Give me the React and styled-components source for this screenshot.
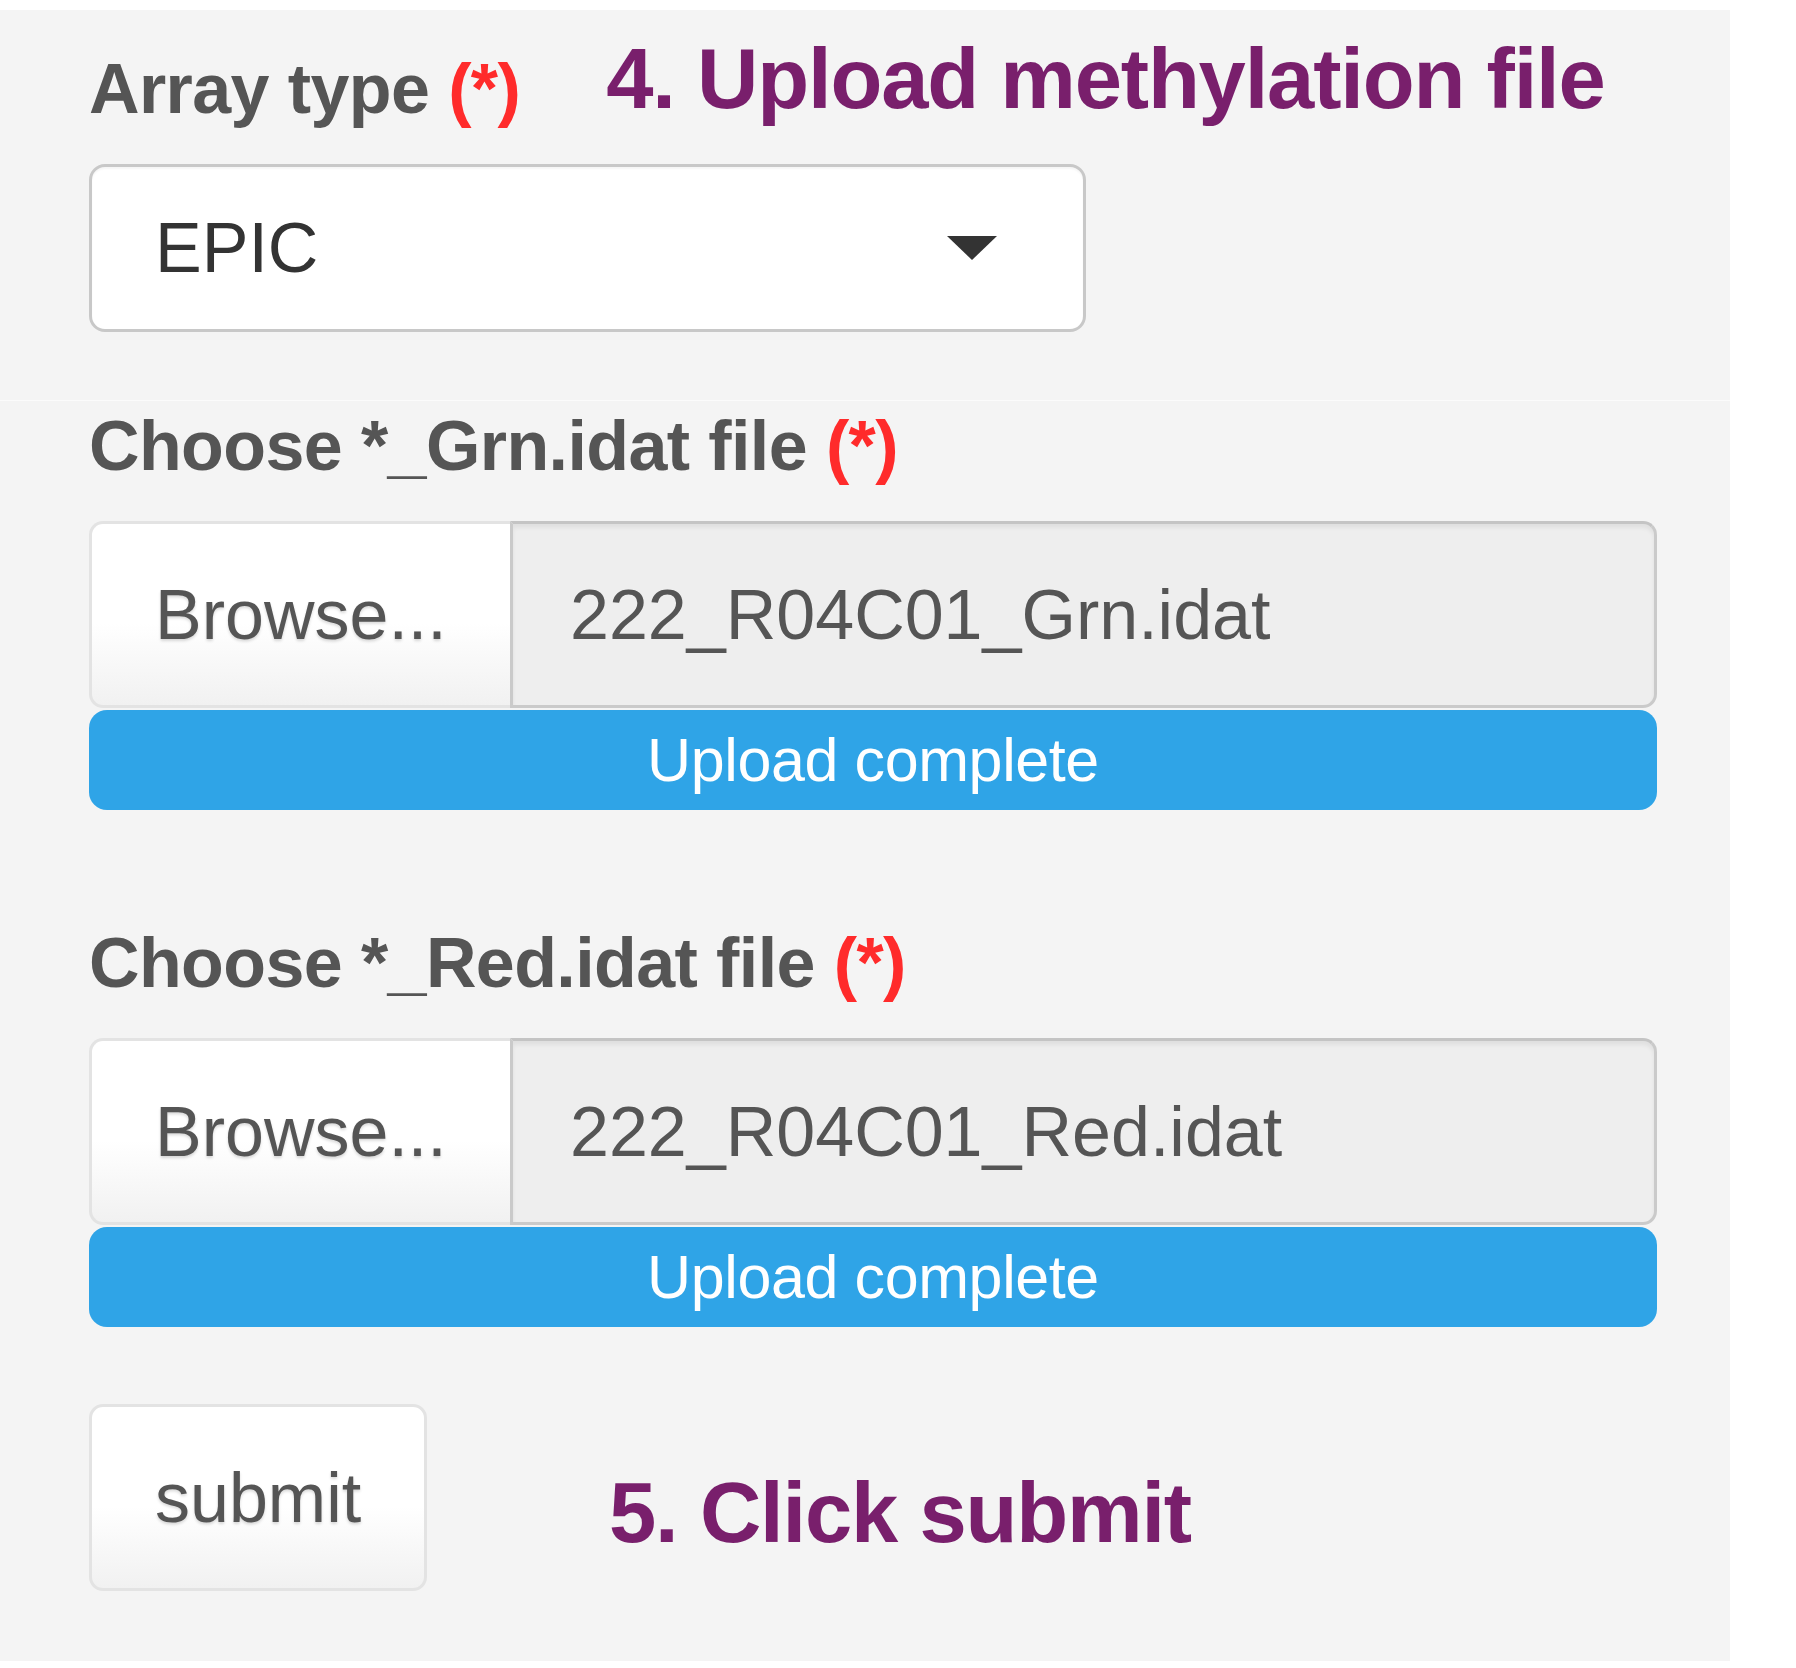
import styled, { createGlobalStyle } from 'styled-components';

const GlobalStyle = createGlobalStyle`
  html, body {
    margin: 0;
    padding: 0;
    background: #fff;
  }
  body {
    font-family: 'Liberation Sans', Arial, sans-serif;
    color: #555;
  }
`;

const Panel = styled.div`
  width: 1730px;
  margin-top: 10px;
  background-color: #f4f4f4;
  display: flex;
  flex-direction: column;
`;

// top part with the select, has its own light line at the bottom
const Section = styled.section`
  box-sizing: border-box;
  padding: ${(p) => p.$pad};
  padding-left: 89px;
  border-bottom: ${(p) => (p.$divided ? '1px solid #fbfbfb' : 'none')};
  display: flex;
  flex-direction: column;
  align-items: flex-start;
`;

const HeadRow = styled.div`
  display: flex;
  align-items: flex-start;
`;

const Label = styled.label`
  display: block;
  font-size: 70px;
  line-height: 70px;
  font-weight: 700;
  color: #555;
  letter-spacing: -0.6px;
  margin-top: ${(p) => p.$top || 0}px;
  white-space: nowrap;
  > span {
    color: #ff2b2b;
  }
`;

const Note = styled.div`
  font-size: 85px;
  line-height: 85px;
  font-weight: 700;
  color: #791f6c;
  letter-spacing: -1.2px;
  white-space: nowrap;
  margin-left: ${(p) => p.$left}px;
  margin-top: ${(p) => p.$top}px;
`;

const Select = styled.div`
  box-sizing: border-box;
  width: 997px;
  height: 168px;
  margin-top: 40px;
  background: #fff;
  border: 3px solid #c8c8c8;
  border-radius: 16px;
  box-shadow: inset 0 2px 2px rgba(0, 0, 0, 0.04);
  display: flex;
  align-items: center;
  justify-content: space-between;
  padding: 0 86px 0 63px;
  font-size: 70px;
  color: #333;
`;

const Caret = styled.span`
  width: 0;
  height: 0;
  border-left: 25px solid transparent;
  border-right: 25px solid transparent;
  border-top: 24px solid #333;
`;

const FileGroup = styled.div`
  width: 1568px;
  margin-top: 40px;
  display: flex;
  flex-direction: column;
  gap: 2px;
`;

const FileRow = styled.div`
  display: flex;
  height: 187px;
`;

const BrowseBtn = styled.button`
  box-sizing: border-box;
  width: 421px;
  height: 100%;
  padding: 0 0 0 63px;
  text-align: left;
  font-family: inherit;
  font-size: 70px;
  color: #555;
  text-shadow: 0 2px 3px rgba(0, 0, 0, 0.15);
  background: linear-gradient(to bottom, #fff 0%, #fff 55%, #f1f1f1 100%);
  border: 3px solid #e3e3e3;
  border-right: none;
  border-radius: 14px 0 0 14px;
`;

const FileName = styled.div`
  box-sizing: border-box;
  flex: 1;
  display: flex;
  align-items: center;
  padding-left: 57px;
  font-size: 70px;
  color: #555;
  background: #eeeeee;
  border: 3px solid #cacaca;
  border-top-color: #c4c4c4;
  border-radius: 0 14px 14px 0;
  box-shadow: inset 0 4px 4px rgba(0, 0, 0, 0.06);
`;

const Progress = styled.div`
  height: 100px;
  border-radius: 18px;
  background: #2fa4e7;
  color: #fff;
  font-size: 61px;
  display: flex;
  align-items: center;
  justify-content: center;
  letter-spacing: -0.4px;
`;

const SubmitRow = styled.div`
  display: flex;
  align-items: flex-start;
  margin-top: 77px;
`;

const SubmitBtn = styled(BrowseBtn)`
  width: 338px;
  height: 187px;
  padding-left: 63px;
  font-size: 70px;
  border: 3px solid #e3e3e3;
  border-radius: 14px;
`;

function FileInput({ label, file, top }) {
  return (
    <>
      <Label $top={top}>
        {label} <span>(*)</span>
      </Label>
      <FileGroup>
        <FileRow>
          <BrowseBtn>Browse...</BrowseBtn>
          <FileName>{file}</FileName>
        </FileRow>
        <Progress>Upload complete</Progress>
      </FileGroup>
    </>
  );
}

export default function App() {
  return (
    <>
      <GlobalStyle />
      <Panel>
        <Section $pad='44px 0 68px' $divided>
          <HeadRow>
            <Label>
              Array type <span>(*)</span>
            </Label>
            <Note $left={86} $top={-18}>
              4. Upload methylation file
            </Note>
          </HeadRow>
          <Select>
            EPIC
            <Caret />
          </Select>
        </Section>
        <Section $pad='10px 0 70px'>
          <FileInput label='Choose *_Grn.idat file' file='222_R04C01_Grn.idat' />
          <FileInput
            label='Choose *_Red.idat file'
            file='222_R04C01_Red.idat'
            top={118}
          />
          <SubmitRow>
            <SubmitBtn>submit</SubmitBtn>
            <Note $left={182} $top={66}>
              5. Click submit
            </Note>
          </SubmitRow>
        </Section>
      </Panel>
    </>
  );
}
